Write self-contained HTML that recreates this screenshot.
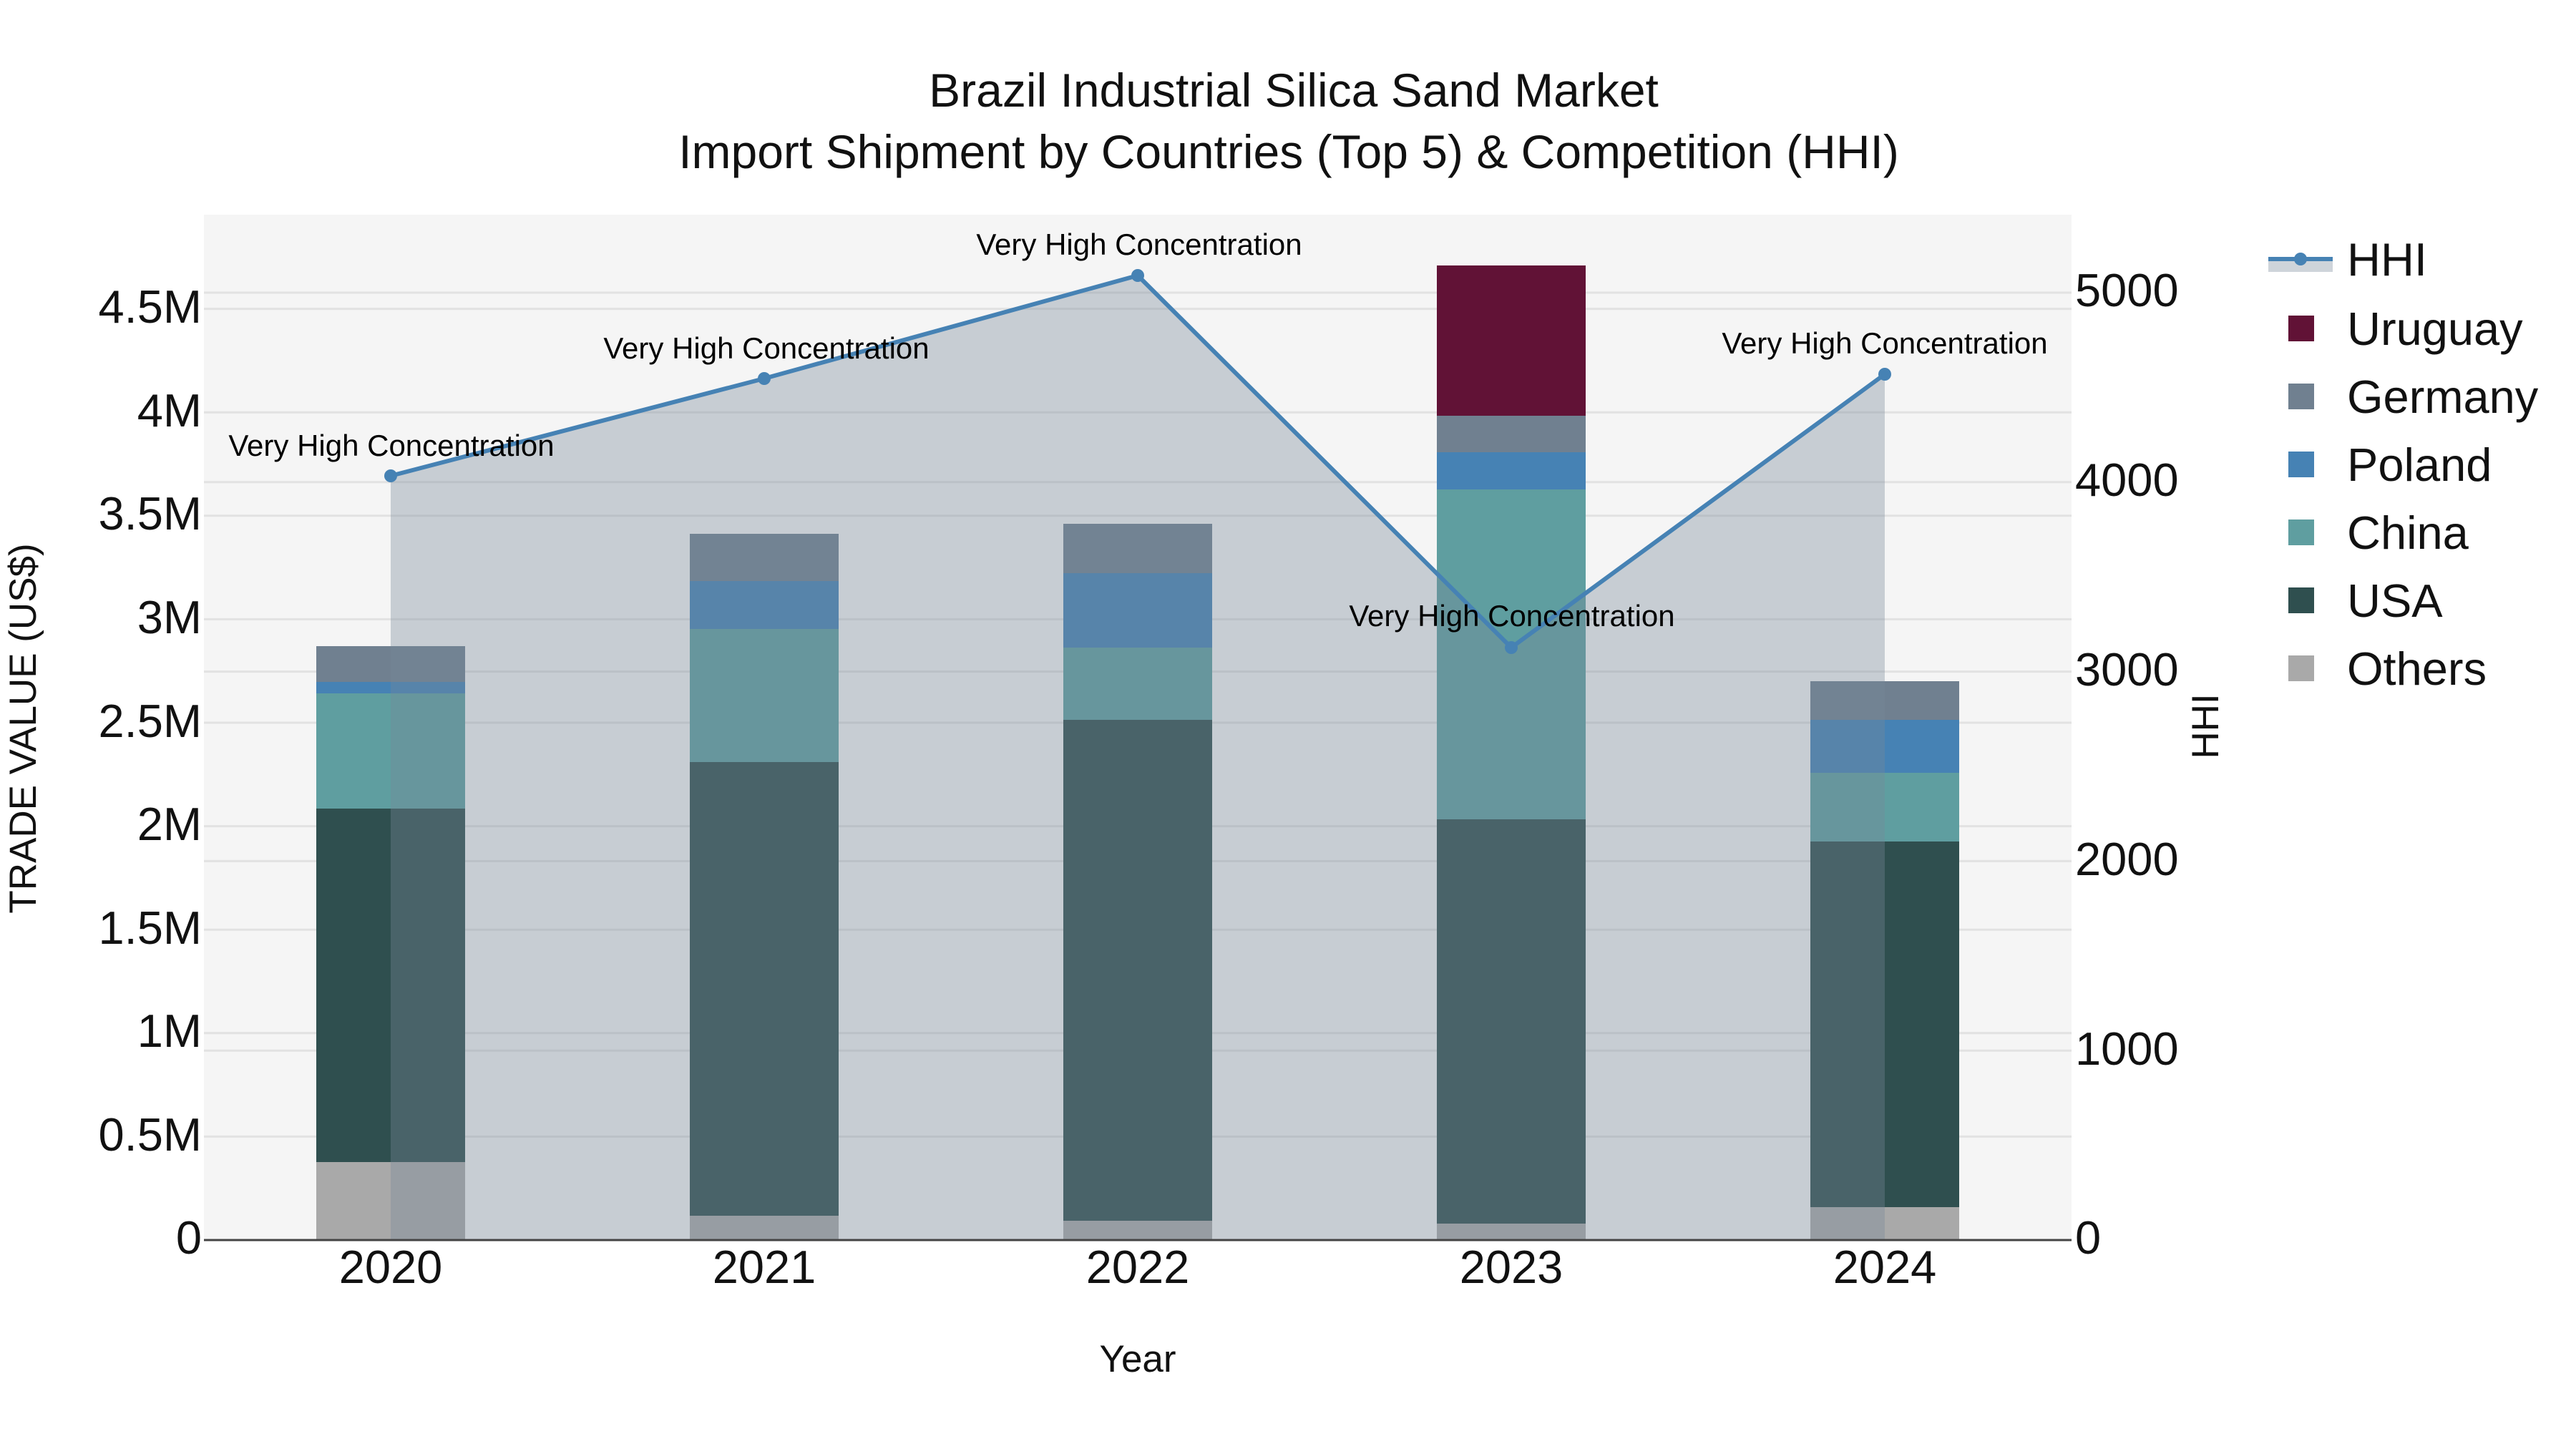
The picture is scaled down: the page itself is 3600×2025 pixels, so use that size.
<!DOCTYPE html>
<html><head><meta charset="utf-8"><style>html,body{margin:0;padding:0;background:#fff}svg{display:block}</style></head>
<body>
<svg width="3600" height="2025" viewBox="0 0 3600 2025" xmlns="http://www.w3.org/2000/svg" font-family="Liberation Sans, Arial, sans-serif">
<rect width="3600" height="2025" fill="#fff"/>
<rect x="285" y="300" width="2610" height="1433" fill="#f5f5f5"/>
<g stroke="#e2e2e2" stroke-width="3">
<line x1="285" x2="2895" y1="1588.4" y2="1588.4"/><line x1="285" x2="2895" y1="1443.8" y2="1443.8"/>
<line x1="285" x2="2895" y1="1299.2" y2="1299.2"/><line x1="285" x2="2895" y1="1154.6" y2="1154.6"/>
<line x1="285" x2="2895" y1="1010" y2="1010"/><line x1="285" x2="2895" y1="865.4" y2="865.4"/>
<line x1="285" x2="2895" y1="720.8" y2="720.8"/><line x1="285" x2="2895" y1="576.2" y2="576.2"/>
<line x1="285" x2="2895" y1="431.6" y2="431.6"/>
<line x1="285" x2="2895" y1="1468.2" y2="1468.2"/><line x1="285" x2="2895" y1="1203.4" y2="1203.4"/>
<line x1="285" x2="2895" y1="938.6" y2="938.6"/><line x1="285" x2="2895" y1="673.8" y2="673.8"/>
<line x1="285" x2="2895" y1="409" y2="409"/>
</g>
<g>
<rect x="442" y="1624" width="208" height="109" fill="#a9a9a9"/>
<rect x="442" y="1130" width="208" height="494" fill="#2f4f4f"/>
<rect x="442" y="969" width="208" height="161" fill="#5f9ea0"/>
<rect x="442" y="953" width="208" height="16" fill="#4682b4"/>
<rect x="442" y="903" width="208" height="50" fill="#708090"/>

<rect x="964" y="1699" width="208" height="34" fill="#a9a9a9"/>
<rect x="964" y="1065" width="208" height="634" fill="#2f4f4f"/>
<rect x="964" y="879" width="208" height="186" fill="#5f9ea0"/>
<rect x="964" y="812" width="208" height="67" fill="#4682b4"/>
<rect x="964" y="746" width="208" height="66" fill="#708090"/>

<rect x="1486" y="1706" width="208" height="27" fill="#a9a9a9"/>
<rect x="1486" y="1006" width="208" height="700" fill="#2f4f4f"/>
<rect x="1486" y="905" width="208" height="101" fill="#5f9ea0"/>
<rect x="1486" y="801" width="208" height="104" fill="#4682b4"/>
<rect x="1486" y="732" width="208" height="69" fill="#708090"/>

<rect x="2008" y="1710" width="208" height="23" fill="#a9a9a9"/>
<rect x="2008" y="1145" width="208" height="565" fill="#2f4f4f"/>
<rect x="2008" y="684" width="208" height="461" fill="#5f9ea0"/>
<rect x="2008" y="632" width="208" height="52" fill="#4682b4"/>
<rect x="2008" y="581" width="208" height="51" fill="#708090"/>
<rect x="2008" y="371" width="208" height="210" fill="#611236"/>

<rect x="2530" y="1687" width="208" height="46" fill="#a9a9a9"/>
<rect x="2530" y="1176" width="208" height="511" fill="#2f4f4f"/>
<rect x="2530" y="1080" width="208" height="96" fill="#5f9ea0"/>
<rect x="2530" y="1006" width="208" height="74" fill="#4682b4"/>
<rect x="2530" y="952" width="208" height="54" fill="#708090"/>
</g>
<polygon points="546,1733 546,665 1068,529 1590,385 2112,905 2634,523 2634,1733" fill="rgb(119,136,153)" fill-opacity="0.36"/>
<polyline points="546,665 1068,529 1590,385 2112,905 2634,523" fill="none" stroke="#4682b4" stroke-width="6" stroke-linejoin="round"/>
<g fill="#4682b4"><circle cx="546" cy="665" r="9"/><circle cx="1068" cy="529" r="9"/><circle cx="1590" cy="385" r="9"/><circle cx="2112" cy="905" r="9"/><circle cx="2634" cy="523" r="9"/></g>
<line x1="285" x2="2895" y1="1733" y2="1733" stroke="#444" stroke-width="3"/>
<g font-size="42" fill="#000" text-anchor="middle">
<text x="547" y="637">Very High Concentration</text>
<text x="1071" y="501">Very High Concentration</text>
<text x="1592" y="356">Very High Concentration</text>
<text x="2113" y="875">Very High Concentration</text>
<text x="2634" y="494">Very High Concentration</text>
</g>
<g font-size="65" fill="#111" text-anchor="end">
<text x="282" y="1752">0</text><text x="282" y="1608">0.5M</text><text x="282" y="1463">1M</text>
<text x="282" y="1319">1.5M</text><text x="282" y="1174">2M</text><text x="282" y="1030">2.5M</text>
<text x="282" y="885">3M</text><text x="282" y="740">3.5M</text><text x="282" y="596">4M</text><text x="282" y="451">4.5M</text>
</g>
<g font-size="65" fill="#111" text-anchor="start">
<text x="2900" y="1752">0</text><text x="2900" y="1488">1000</text><text x="2900" y="1223">2000</text>
<text x="2900" y="958">3000</text><text x="2900" y="693">4000</text><text x="2900" y="428">5000</text>
</g>
<g font-size="65" fill="#111" text-anchor="middle">
<text x="546" y="1793">2020</text><text x="1068" y="1793">2021</text><text x="1590" y="1793">2022</text>
<text x="2112" y="1793">2023</text><text x="2634" y="1793">2024</text>
</g>
<text x="1590" y="1917" font-size="53" text-anchor="middle" fill="#111">Year</text>
<text transform="translate(50,1018) rotate(-90)" font-size="53" text-anchor="middle" fill="#111">TRADE VALUE (US$)</text>
<text transform="translate(3100,1015) rotate(-90)" font-size="53" text-anchor="middle" fill="#111">HHI</text>
<g font-size="66" fill="#111" text-anchor="middle">
<text x="1808" y="149">Brazil Industrial Silica Sand Market</text>
<text x="1801" y="235">Import Shipment by Countries (Top 5) &amp; Competition (HHI)</text>
</g>
<rect x="3170" y="362" width="90" height="18" fill="rgb(119,136,153)" fill-opacity="0.36"/>
<line x1="3170" x2="3260" y1="362" y2="362" stroke="#4682b4" stroke-width="6"/>
<circle cx="3215" cy="362" r="9" fill="#4682b4"/>
<rect x="3198" y="441" width="36" height="36" fill="#611236"/>
<rect x="3198" y="536" width="36" height="36" fill="#708090"/>
<rect x="3198" y="631" width="36" height="36" fill="#4682b4"/>
<rect x="3198" y="726" width="36" height="36" fill="#5f9ea0"/>
<rect x="3198" y="821" width="36" height="36" fill="#2f4f4f"/>
<rect x="3198" y="916" width="36" height="36" fill="#a9a9a9"/>
<g font-size="65" fill="#111">
<text x="3280" y="385">HHI</text><text x="3280" y="482">Uruguay</text><text x="3280" y="577">Germany</text>
<text x="3280" y="672">Poland</text><text x="3280" y="767">China</text><text x="3280" y="862">USA</text><text x="3280" y="957">Others</text>
</g>
</svg>
</body></html>
